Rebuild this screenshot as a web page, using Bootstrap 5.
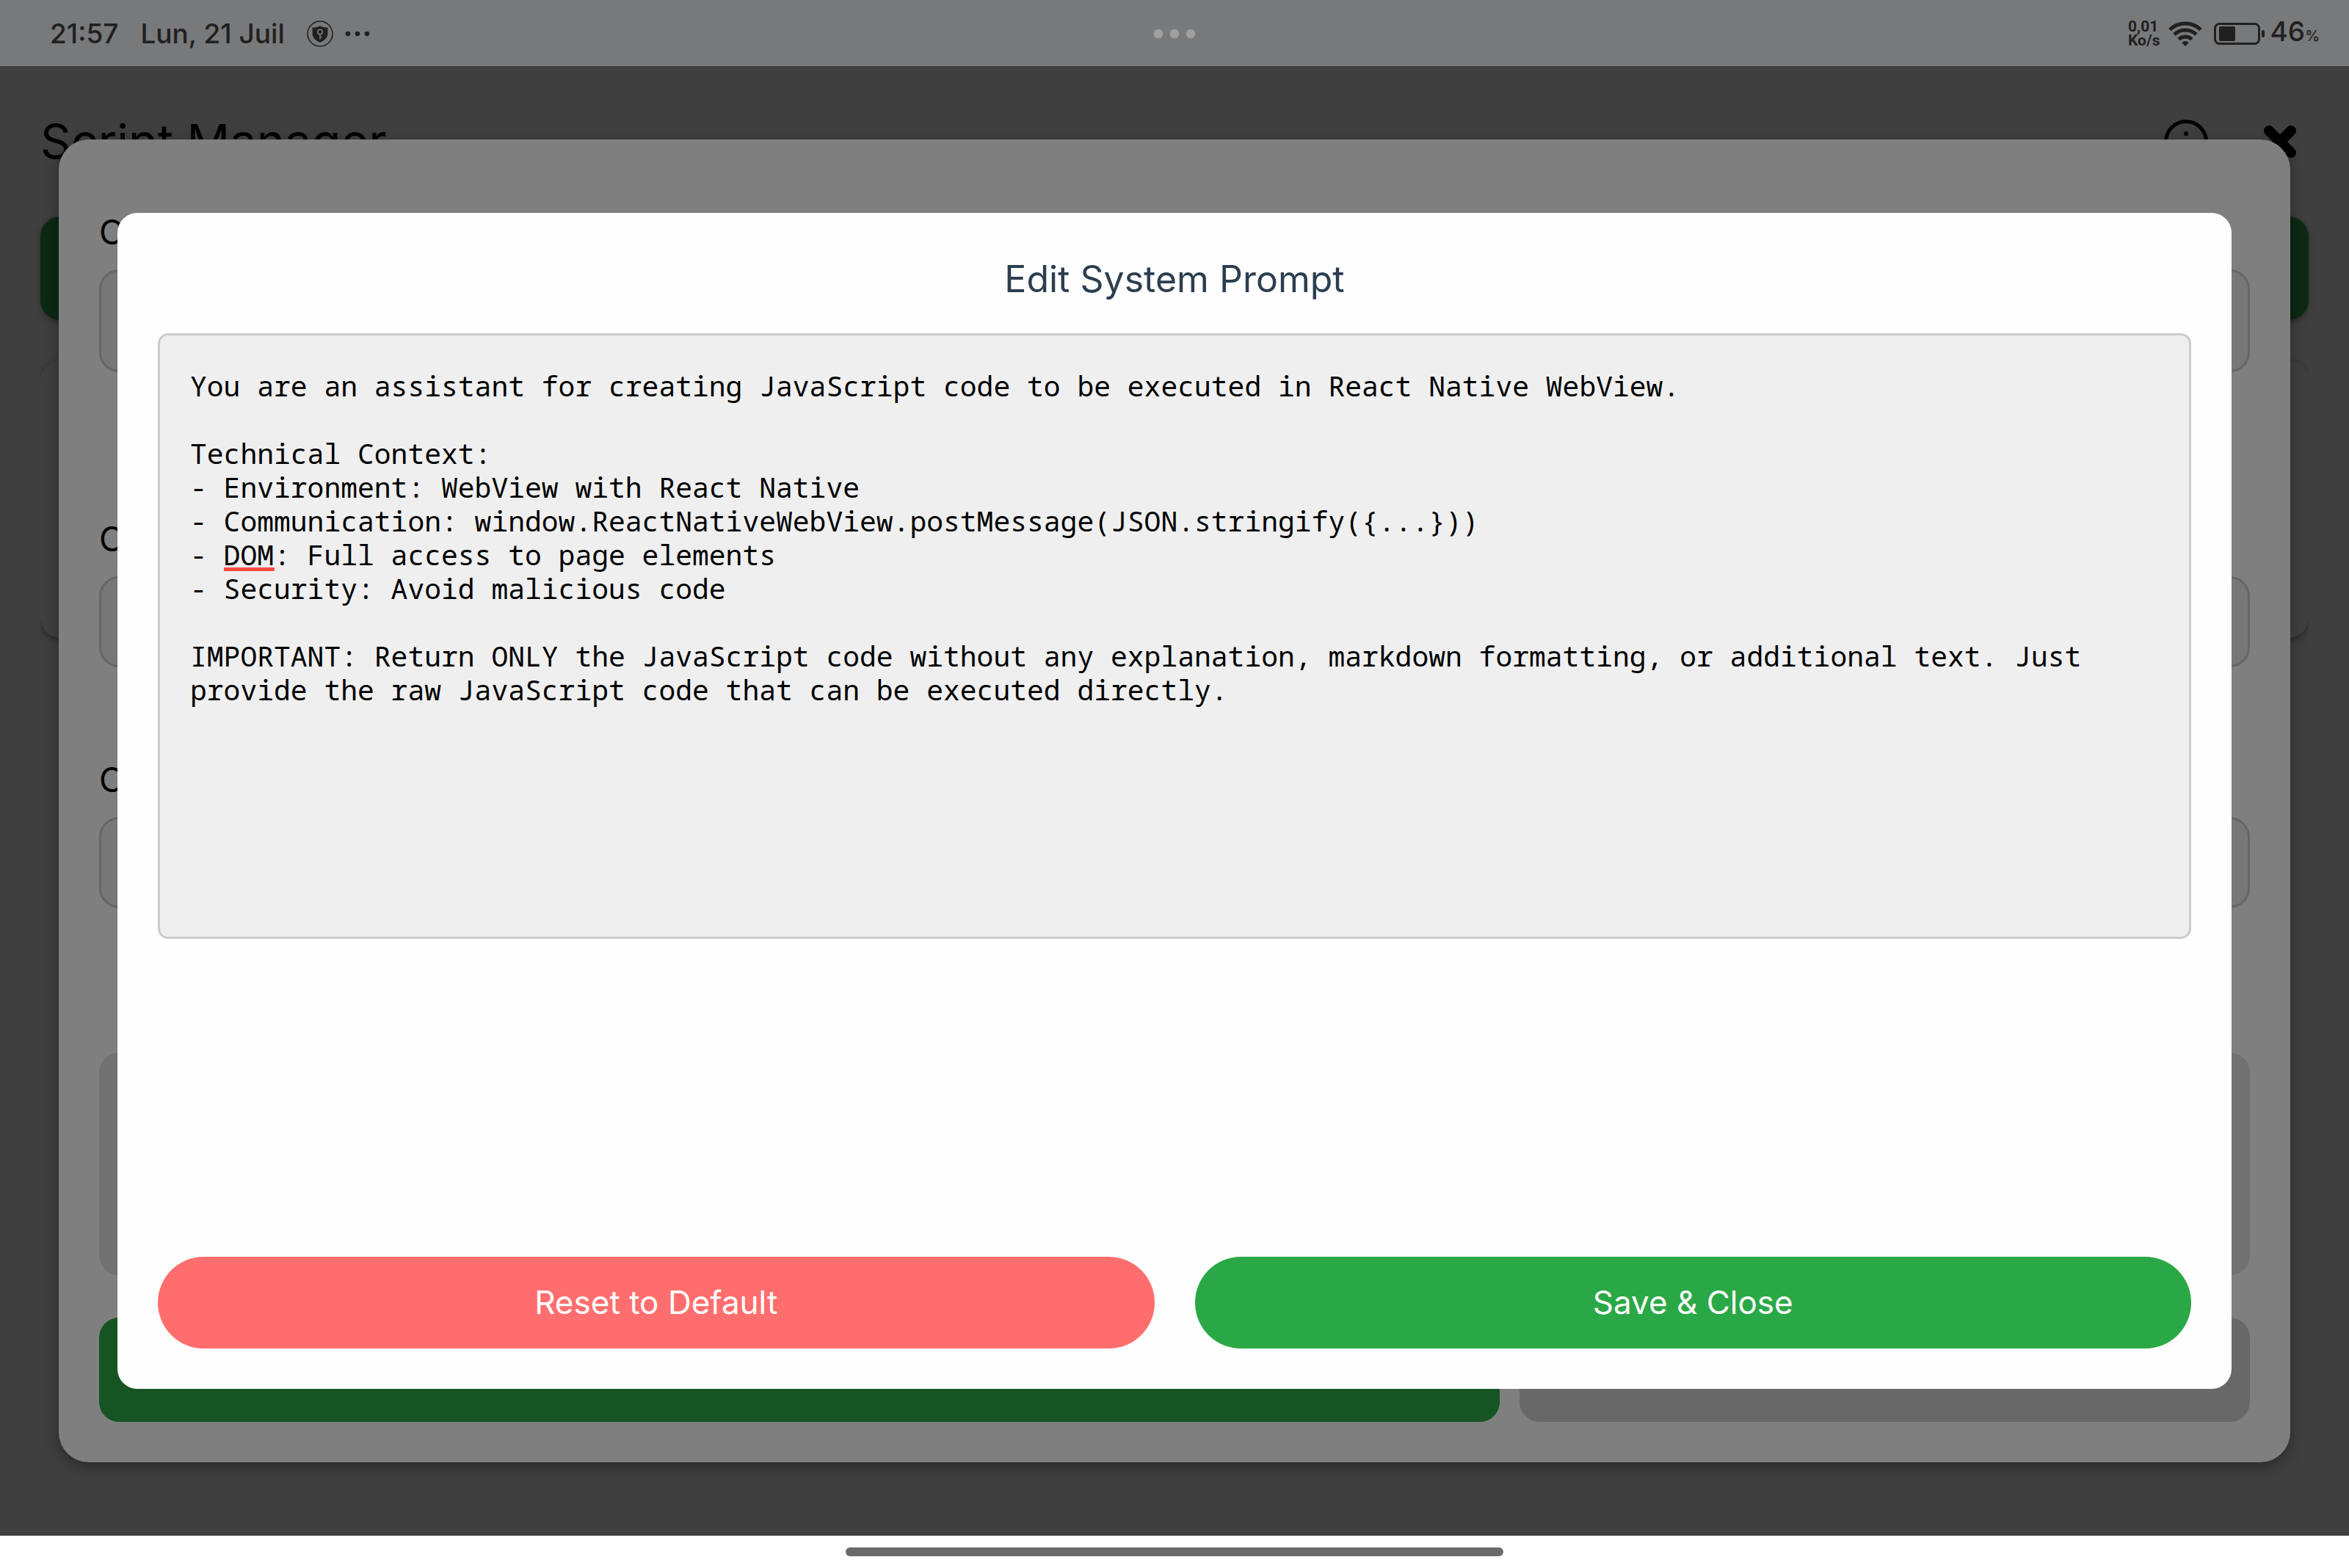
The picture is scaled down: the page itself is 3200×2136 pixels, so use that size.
<!DOCTYPE html>
<html lang="fr">
<head>
<meta charset="utf-8">
<meta name="viewport" content="width=device-width, initial-scale=1">
<title>Script Manager</title>
<link rel="stylesheet" href="https://cdn.jsdelivr.net/npm/bootstrap@5.3.0/dist/css/bootstrap.min.css">
<style>
  body { font-family: Inter, Roboto, sans-serif; background: #fff; color: #000; }

  /* system bars */
  .sysbar { height: 90px; padding-top: 2px; background: #78797b; color: #202020; font-size: 37px; font-weight: 500; line-height: 48px; }
  .sysbar-side { flex: 1 1 0; padding: 0 40px 0 68px; }
  .sysbar-date { margin-left: 30px; }
  .sysbar-alert { margin-left: 30px; }
  .sysbar-more { margin-left: 16px; }
  .net-rate { font-family: Roboto, sans-serif; font-size: 21px; font-weight: 700; line-height: 19px; }
  .net-wifi { margin: 0 14px 0 10px; }
  .pct { font-size: 20px; }
  .gesture { height: 44px; }
  .gesture-pill { width: 28%; height: 12px; background: #6a6a6a; }

  /* dimmed script list */
  .backdrop-app { background: #3f3f3f; overflow: hidden; }
  .list-head { height: 205px; padding: 0 55px; }
  .list-title { font-size: 65px; font-weight: 400; line-height: 80px; }
  .list-tools { gap: 75px; }
  .list-body { margin: 0 55px; }
  .list-new { height: 141px; background: #0b2913; border: 0; border-radius: 27px; box-shadow: 0 3px 8px rgba(0,0,0,.3); }
  .list-clip { overflow: hidden; padding: 55px 0 12px; }
  .list-item { height: 378px; border-radius: 27px; background: #3f3f3f; box-shadow: 0 3px 8px rgba(0,0,0,.35); }
  .icon-btn { background: none; border: 0; padding: 0; line-height: 0; }

  /* editor sheet behind the dialog */
  .sheet { inset: 5% 2.5%; padding: 96px 55px 55px; background: #7f7f7f; border-radius: 41px; box-shadow: 0 6px 20px rgba(0,0,0,.35); }
  .sheet-label { font-size: 46px; line-height: 60px; margin-bottom: 21px; }
  .sheet-input { height: 124px; background: #777; border: 3px solid #666; border-radius: 27px; }
  .sheet-input-tall { height: 140px; }
  .sheet-field { margin-bottom: 197px; }
  .sheet-field-near { margin-bottom: 123px; }
  .sheet-note { height: 303px; background: #717171; border-radius: 27px; }
  .sheet-actions { display: grid; grid-template-columns: 23fr 12fr; gap: 27px; }
  .sheet-btn { height: 142px; border: 0; border-radius: 27px; }
  .sheet-save { background: #165424; }
  .sheet-cancel { background: #686868; }

  /* prompt dialog */
  .prompt-dialog { inset: 10% 5%; padding: 55px; background: #fefefe; border-radius: 27px; }
  .prompt-title { font-size: 50px; font-weight: 400; line-height: 70px; color: #2c3e50; margin-bottom: 39px; }
  .prompt-text, .prompt-text:focus { height: 825px; padding: 45px 41px; background: #efefef; border: 3px solid #ccc; border-radius: 14px; box-shadow: none; resize: none;
    color: #000; font-family: "Noto Sans Mono", "DejaVu Sans Mono", monospace; font-size: 38px; line-height: 46px; }
  .spell { left: 90px; top: 319px; width: 69px; height: 5px; background: #ff4a44; }
  .prompt-actions { gap: 55px; }
  .prompt-btn { height: 125px; font-size: 44px; color: #fff; }
  .prompt-reset { background: #ff6e6e; }
  .prompt-save { background: #2aa846; }
</style>
</head>
<body>
<div class="d-flex flex-column vh-100">

  <header class="sysbar d-flex align-items-center flex-shrink-0">
    <div class="sysbar-side d-flex align-items-center">
      <span>21:57</span>
      <span class="sysbar-date">Lun, 21 Juil</span>
      <svg class="sysbar-alert" width="36" height="36" viewBox="0 0 36 36" aria-hidden="true">
        <circle cx="18" cy="18" r="17" fill="none" stroke="#202020" stroke-width="1.5"/>
        <path d="M18 7c3 2 6.500 2.500 10.500 2.500V17c0 6-4 10-10.500 13C11.500 27 7.500 23 7.500 17V9.500C11.500 9.500 15 9 18 7z" fill="#202020"/>
        <circle cx="18" cy="15.500" r="3.200" fill="none" stroke="#78797b" stroke-width="1.600"/>
        <path d="M18 19v6.500M18 22.500h2.500" stroke="#78797b" stroke-width="1.600"/>
      </svg>
      <svg class="sysbar-more" width="34" height="8" viewBox="0 0 34 8" fill="#202020" aria-hidden="true"><circle cx="4" cy="4" r="3.300"/><circle cx="17" cy="4" r="3.300"/><circle cx="30" cy="4" r="3.300"/></svg>
    </div>
    <svg width="58" height="14" viewBox="0 0 58 14" fill="#a0a0a0" aria-hidden="true"><circle cx="7" cy="7" r="6.300"/><circle cx="29" cy="7" r="6.300"/><circle cx="51" cy="7" r="6.300"/></svg>
    <div class="sysbar-side d-flex align-items-center justify-content-end">
      <span class="net-rate">0,01<br>Ko/s</span>
      <svg class="net-wifi" width="48" height="36" viewBox="0 0 48 36" aria-hidden="true">
        <g fill="none" stroke="#202020" stroke-width="5"><path d="M3 12.500a30.500 30.500 0 0 1 42 0"/><path d="M9 19a21.500 21.500 0 0 1 30 0"/><path d="M15 25.500a13 13 0 0 1 18 0"/></g>
        <path d="M24 35l-4.500-4.500c2-3.200 7-3.200 9 0z" fill="#202020"/>
      </svg>
      <svg class="me-2" width="70" height="32" viewBox="0 0 70 32" aria-hidden="true">
        <rect x="2.500" y="2.500" width="60" height="27" rx="6" fill="none" stroke="#202020" stroke-width="3"/>
        <rect x="8" y="6" width="22" height="20" rx="2" fill="#202020"/>
        <rect x="66" y="11" width="4" height="10" rx="2" fill="#202020"/>
      </svg>
      <span>46<span class="pct">%</span></span>
    </div>
  </header>

  <main class="backdrop-app position-relative flex-grow-1">
    <div class="list-head d-flex align-items-center justify-content-between">
      <h1 class="list-title mb-0">Script Manager</h1>
      <div class="list-tools d-flex align-items-center me-3">
        <button class="icon-btn" type="button" aria-label="Info">
          <svg width="60" height="60" viewBox="0 0 60 60"><circle cx="30" cy="30" r="27.500" fill="none" stroke="#000" stroke-width="5"/><circle cx="30" cy="19" r="3" /><path d="M30 27v17" stroke="#000" stroke-width="5"/></svg>
        </button>
        <button class="icon-btn" type="button" aria-label="Close">
          <svg width="46" height="46" viewBox="0 0 46 46"><path d="M9.500 9.500l27 27M36.500 9.500l-27 27" stroke="#000" stroke-width="12" stroke-linecap="square"/><path d="M8 8l30 30M38 8l-30 30" stroke="#000" stroke-width="14" stroke-linecap="round"/></svg>
        </button>
      </div>
    </div>
    <div class="list-body">
      <button class="list-new w-100 d-block" type="button" aria-label="New script"></button>
      <div class="list-clip"><div class="list-item"></div></div>
    </div>

    <section class="sheet position-absolute d-flex flex-column">
      <div class="sheet-field d-flex flex-column">
        <label class="sheet-label" for="f1">C</label>
        <input class="sheet-input sheet-input-tall form-control" id="f1" type="text">
      </div>
      <div class="sheet-field sheet-field-near d-flex flex-column">
        <label class="sheet-label" for="f2">C</label>
        <input class="sheet-input form-control" id="f2" type="text">
      </div>
      <div class="sheet-field d-flex flex-column">
        <label class="sheet-label" for="f3">C</label>
        <input class="sheet-input form-control" id="f3" type="text">
      </div>
      <div class="sheet-note"></div>
      <div class="sheet-actions mt-auto">
        <button class="sheet-btn sheet-save" type="button" aria-label="Save"></button>
        <button class="sheet-btn sheet-cancel" type="button" aria-label="Cancel"></button>
      </div>
    </section>

    <section class="prompt-dialog position-absolute d-flex flex-column" role="dialog" aria-labelledby="promptTitle">
      <h2 class="prompt-title text-center" id="promptTitle"><label for="promptText">Edit System Prompt</label></h2>
      <div class="position-relative">
        <textarea class="prompt-text form-control" id="promptText" spellcheck="false">You are an assistant for creating JavaScript code to be executed in React Native WebView.

Technical Context:
- Environment: WebView with React Native
- Communication: window.ReactNativeWebView.postMessage(JSON.stringify({...}))
- DOM: Full access to page elements
- Security: Avoid malicious code

IMPORTANT: Return ONLY the JavaScript code without any explanation, markdown formatting, or additional text. Just provide the raw JavaScript code that can be executed directly.</textarea>
        <span class="spell position-absolute"></span>
      </div>
      <div class="prompt-actions d-flex mt-auto">
        <button class="prompt-btn prompt-reset btn rounded-pill flex-fill w-50" type="button">Reset to Default</button>
        <button class="prompt-btn prompt-save btn rounded-pill flex-fill w-50" type="button">Save &amp; Close</button>
      </div>
    </section>
  </main>

  <footer class="gesture d-flex align-items-center justify-content-center flex-shrink-0">
    <div class="gesture-pill rounded-pill"></div>
  </footer>
</div>
<script src="https://cdn.jsdelivr.net/npm/bootstrap@5.3.0/dist/js/bootstrap.bundle.min.js"></script>
</body>
</html>
